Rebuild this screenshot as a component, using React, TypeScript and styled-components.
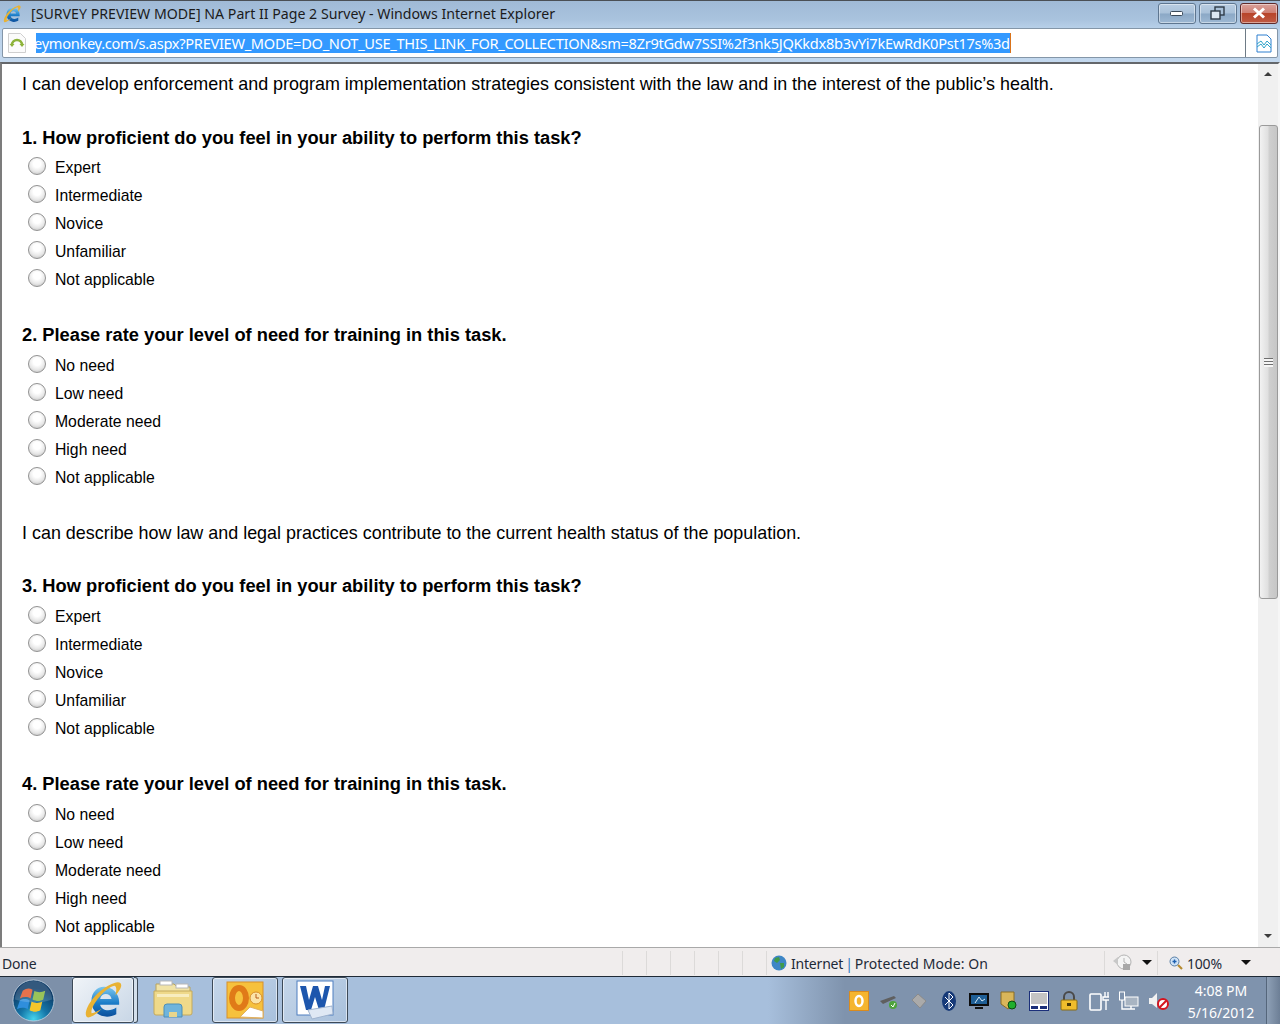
import React from "react";
import styled, { createGlobalStyle } from "styled-components";

const Global = createGlobalStyle`
  html, body { margin: 0; padding: 0; height: 100%; overflow: hidden; background: #fff; }
  #root { height: 100%; }
`;

const Screen = styled.div`
  width: 1280px;
  height: 1024px;
  display: flex;
  flex-direction: column;
  overflow: hidden;
  font-family: "Liberation Sans", Arial, sans-serif;
`;

const Chrome = styled.div`
  height: 62px;
  flex: none;
  background: linear-gradient(180deg, #a0bad6 0%, #a9c3de 30%, #b9d1ea 46%, #c3d8ee 100%);
  border-top: 1px solid #4a4f55;
  box-sizing: border-box;
  display: flex;
  flex-direction: column;
`;

const TitleRow = styled.div`
  height: 27px;
  flex: none;
  display: flex;
  align-items: center;
  padding: 0 2px 0 3px;
`;

const Title = styled.div`
  margin: -3px 0 0 10px;
  flex: 1;
  font: 14.17px "Noto Sans", sans-serif;
  color: #1b1b1b;
  white-space: nowrap;
`;

const TitleIcon = styled.div`
  display: flex;
  margin-top: -2px;
`;

const WinButtons = styled.div`
  display: flex;
  gap: 3px;
  margin-top: -3px;
`;

const WinButton = styled.div<{ $close?: boolean }>`
  width: 38px;
  height: 21px;
  box-sizing: border-box;
  border: 1px solid ${({ $close }) => ($close ? "#5f2a2a" : "#5e7690")};
  border-radius: 3px;
  box-shadow: inset 0 0 0 1px rgba(255, 255, 255, 0.45);
  display: flex;
  align-items: center;
  justify-content: center;
  background: ${({ $close }) =>
    $close
      ? "linear-gradient(180deg, #d9a19b 0%, #cf8074 45%, #b8442a 50%, #bf5a44 100%)"
      : "linear-gradient(180deg, #b9cde2 0%, #a9c1d9 48%, #8ba8c6 52%, #9db8d3 100%)"};
`;

const AddressRow = styled.div`
  height: 30px;
  flex: none;
  margin: 0 2px 0 2px;
  box-sizing: border-box;
  background: #fff;
  border: 1px solid #8496a8;
  border-radius: 2px;
  display: flex;
  align-items: center;
`;

const PageIcon = styled.div`
  width: 33px;
  flex: none;
  box-sizing: border-box;
  padding-right: 5px;
  display: flex;
  justify-content: center;
`;

const UrlClip = styled.div`
  flex: 1;
  height: 20px;
  overflow: hidden;
  white-space: nowrap;
  font: 14.6px "Noto Sans", sans-serif;
`;

const UrlSelected = styled.div`
  width: 975px;
  height: 20px;
  line-height: 20px;
  overflow: hidden;
  background: #3399ff;
  color: #fff;
  box-sizing: border-box;
  border-right: 1px solid #d9731a;
  letter-spacing: -0.29px;
  text-indent: -2px;
`;

const CompatBox = styled.div`
  width: 32px;
  height: 100%;
  flex: none;
  box-sizing: border-box;
  border-left: 1px solid #6e7b86;
  padding-left: 4px;
  display: flex;
  align-items: center;
  justify-content: center;
`;

const Viewport = styled.div`
  height: 885px;
  flex: none;
  display: flex;
  border-top: 2px solid #64676b;
  border-left: 2px solid #7c7c7c;
  border-right: 2px solid #f6f6f6;
  box-sizing: border-box;
  background: #fff;
`;

const Survey = styled.div`
  flex: 1;
  padding: 9px 0 0 20px;
  color: #000;
`;

const Statement = styled.div<{ $lead?: boolean }>`
  font-size: 17.93px;
  line-height: 22px;
  height: 22px;
  margin-bottom: ${({ $lead }) => ($lead ? 32 : 31)}px;
  white-space: nowrap;
`;

const QuestionBlock = styled.div`
  margin-bottom: 31px;
`;

const Question = styled.div<{ $lead?: boolean }>`
  font-size: 18.3px;
  font-weight: 700;
  line-height: 22px;
  height: 22px;
  margin-bottom: ${({ $lead }) => ($lead ? 4 : 5)}px;
  white-space: nowrap;
`;

const Option = styled.div`
  height: 28px;
  display: flex;
  align-items: center;
  padding-left: 6px;
`;

const Radio = styled.span`
  width: 18px;
  height: 18px;
  box-sizing: border-box;
  border-radius: 50%;
  border: 1px solid #929292;
  background: radial-gradient(circle at 50% 36%, #ffffff 28%, #e8e8e8 60%, #b4b4b4 100%);
  flex: none;
  margin-top: -2px;
`;

const OptionLabel = styled.span`
  margin: 2px 0 0 9px;
  font-size: 15.75px;
  white-space: nowrap;
`;

const ScrollBar = styled.div`
  width: 20px;
  flex: none;
  background: #f0f0f0;
  box-sizing: border-box;
  display: flex;
  flex-direction: column;
  align-items: center;
`;

const ScrollArrow = styled.div<{ $down?: boolean }>`
  height: 61px;
  width: 100%;
  flex: none;
  display: flex;
  justify-content: center;
  align-items: ${({ $down }) => ($down ? "flex-end" : "flex-start")};
  padding: ${({ $down }) => ($down ? "0 0 9px" : "8px 0 0")};
  box-sizing: border-box;
  &::before {
    content: "";
    border-left: 4px solid transparent;
    border-right: 4px solid transparent;
    ${({ $down }) => ($down ? "border-top" : "border-bottom")}: 4px solid #3c3c3c;
  }
`;

const Thumb = styled.div`
  width: 19px;
  height: 474px;
  flex: none;
  box-sizing: border-box;
  border: 1px solid #9a9a9a;
  border-radius: 3px;
  background: linear-gradient(90deg, #f2f2f2 0%, #e0e0e0 45%, #cfcfcf 55%, #c6c6c6 100%);
  display: flex;
  align-items: center;
  justify-content: center;
`;

const Grip = styled.div`
  width: 9px;
  height: 9px;
  background: repeating-linear-gradient(180deg, #6f6f6f 0 1px, #f5f5f5 1px 3px);
`;

const ScrollFill = styled.div`
  flex: 1;
`;

const StatusBar = styled.div`
  height: 29px;
  flex: none;
  box-sizing: border-box;
  border-top: 1px solid #a9a9a9;
  background: #f0eded;
  display: flex;
  align-items: center;
  font: 14px "Noto Sans", sans-serif;
  letter-spacing: -0.2px;
  color: #1e2a38;
  padding: 1px 0 0 2px;
`;

const StatusText = styled.div<{ $width: number }>`
  width: ${({ $width }) => $width}px;
  flex: none;
  white-space: nowrap;
  padding-top: 2px;
`;

const StatusCell = styled.div<{ $width: number }>`
  width: ${({ $width }) => $width}px;
  height: 24px;
  flex: none;
  box-sizing: border-box;
  border-left: 1px solid #dcdad9;
  display: flex;
  align-items: center;
  white-space: nowrap;
`;

const CellLabel = styled.span<{ $tracking?: number }>`
  padding-top: 2px;
  letter-spacing: ${({ $tracking }) => $tracking ?? -0.2}px;
`;

const Gap = styled.span<{ $w: number }>`
  width: ${({ $w }) => $w}px;
  flex: none;
`;

const Caret = styled.span`
  border-left: 5px solid transparent;
  border-right: 5px solid transparent;
  border-top: 5px solid #111;
`;

const ZoneSep = styled.span`
  color: #2b74bd;
  margin: 0 2px;
  padding-top: 2px;
`;

const Taskbar = styled.div`
  height: 48px;
  flex: none;
  box-sizing: border-box;
  border-top: 1px solid #1f2a36;
  display: flex;
  background: linear-gradient(90deg, #a7bfdc 0%, #a7bfdc 60%, #7f93ad 66%, #7f93ad 100%);
`;

const StartArea = styled.div`
  width: 72px;
  flex: none;
  background: #7d90a9;
  display: flex;
  align-items: center;
  padding-left: 12px;
  box-sizing: border-box;
`;

const TaskButton = styled.div<{ $active?: boolean; $bare?: boolean; $width: number }>`
  width: ${({ $width }) => $width}px;
  flex: none;
  height: 46px;
  margin-right: ${({ $active }) => ($active ? 0 : 4)}px;
  box-sizing: border-box;
  display: flex;
  align-items: center;
  justify-content: center;
  border-radius: 3px;
  border: ${({ $bare }) => ($bare ? "1px solid transparent" : "1px solid #3d4a58")};
  box-shadow: ${({ $bare }) => ($bare ? "none" : "inset 0 0 0 1px rgba(255,255,255,0.55)")};
  background: ${({ $active, $bare }) =>
    $bare
      ? "transparent"
      : $active
      ? "linear-gradient(135deg, #f0f4f8 0%, #c8d6e6 100%)"
      : "linear-gradient(135deg, #c5d6e9 0%, #a8c0dc 100%)"};
`;

const StackEdge = styled.div`
  width: 4px;
  height: 46px;
  flex: none;
  box-sizing: border-box;
  background: #d3dfeb;
  border: 1px solid #3d4a58;
  border-left: none;
  border-radius: 0 3px 3px 0;
`;

const TaskSpacer = styled.div`
  flex: 1;
`;

const Tray = styled.div`
  display: flex;
  align-items: center;
`;

const TrayCell = styled.div`
  width: 30px;
  flex: none;
  display: flex;
  justify-content: center;
  align-items: center;
`;

const Clock = styled.div`
  width: 92px;
  flex: none;
  text-align: center;
  font: 14px/22px "Noto Sans", sans-serif;
  color: #fff;
  padding: 3px 0 0 2px;
  box-sizing: border-box;
`;

const ShowDesktop = styled.div`
  width: 14px;
  flex: none;
  background: linear-gradient(90deg, #8ea0b6, #6d7f96);
  border-left: 1px solid #55667b;
  box-sizing: border-box;
`;

function IeLogo({ size, id }: { size: number; id: string }) {
  return (
    <svg width={size} height={size} viewBox="0 0 40 40">
      <defs>
        <linearGradient id={id} x1="0" y1="0" x2="0" y2="1">
          <stop offset="0" stopColor="#7cc8ef" />
          <stop offset="0.55" stopColor="#1b7cc8" />
          <stop offset="1" stopColor="#0b4f9c" />
        </linearGradient>
      </defs>
      <path
        d="M21 6c9 0 16 7 16 16v3H17c1 6 10 8 17 3v7c-11 6-25 1-26-12C7 13 13 6 21 6zm-4 13h12c-1-7-11-7-12 0z"
        fill={`url(#${id})`}
      />
      <path
        d="M3 38C-2 33 10 10 32 2c5-2 8 0 7 4-1 3-3 6-6 9 1-4 2-9-1-10C22 7 6 27 8 34c3 0 8-3 11-5-5 5-13 11-16 9z"
        fill="#e9b233"
      />
    </svg>
  );
}

function SiteIcon() {
  return (
    <svg width="20" height="22" viewBox="0 0 20 22">
      <path d="M1.5 1.5h12l5 5v14h-17z" fill="#fbfbfb" stroke="#cfcfcf" />
      <path d="M5 13a5 5 0 0 1 10 0" fill="none" stroke="#8db33a" strokeWidth="2.6" />
      <path d="M2.5 12h5l-2.5 3zM12.5 12h5L15 15z" fill="#8db33a" />
    </svg>
  );
}

function CompatIcon() {
  return (
    <svg width="16" height="19" viewBox="0 0 16 19">
      <path d="M1 1h10l4 4v13H1z" fill="#fff" stroke="#2d7fd0" />
      <path d="M1 10l4-3 3 4 3-4 4 4M1 13l4-3 3 4 3-4 4 4" fill="none" stroke="#2da3c9" />
    </svg>
  );
}

function Globe() {
  return (
    <svg width="16" height="16" viewBox="0 0 16 16">
      <circle cx="8" cy="8" r="7.5" fill="#3e86c6" />
      <path d="M4 3l4-1 1 3-3 3-3-2zM9 8l4 0 0 4-3 2z" fill="#3f9a4a" />
    </svg>
  );
}

function SecurityIcon() {
  return (
    <svg width="20" height="20" viewBox="0 0 20 20">
      <circle cx="11" cy="9" r="7" fill="#f4f4f4" stroke="#b4b4b4" />
      <path d="M11 5v4l3 2" fill="none" stroke="#b4b4b4" />
      <path d="M0 8l5-4v8z" fill="#c8c8c8" />
      <rect x="10" y="11" width="7" height="6" fill="#a8a8a8" />
    </svg>
  );
}

function Magnifier() {
  return (
    <svg width="14" height="14" viewBox="0 0 14 14">
      <circle cx="5.5" cy="5.5" r="4.5" fill="#cfe3f7" stroke="#5a7fa5" />
      <path d="M3.5 5.5h4M5.5 3.5v4" stroke="#1c5fb0" strokeWidth="1.4" />
      <path d="M9 9l4 4" stroke="#b58a2e" strokeWidth="2.2" />
    </svg>
  );
}

function StartOrb() {
  return (
    <svg width="43" height="43" viewBox="0 0 44 44">
      <defs>
        <radialGradient id="orb" cx="50%" cy="95%" r="75%">
          <stop offset="0" stopColor="#45d4ee" />
          <stop offset="0.45" stopColor="#1576a8" />
          <stop offset="1" stopColor="#0c3a66" />
        </radialGradient>
      </defs>
      <circle cx="22" cy="22" r="21" fill="url(#orb)" stroke="#c9d6e3" strokeOpacity="0.8" />
      <path d="M11 12c4-3 7-3 10-1l-2 9c-3-2-7-2-11 0z" fill="#e4582a" />
      <path d="M23 12c3 2 7 2 11 0l-2 9c-3 2-7 2-11 0z" fill="#86b83a" />
      <path d="M8 22c3-2 7-2 10 0l-2 9c-3-2-7-2-11 0z" fill="#2f8edc" />
      <path d="M20 23c4 2 7 2 11 0l-2 9c-4 2-7 2-11 0z" fill="#f5c62c" />
      <path d="M3 21a19 19 0 0 1 38 0c-10 4-26 4-38 0z" fill="#fff" fillOpacity="0.16" />
    </svg>
  );
}

function FolderIcon() {
  return (
    <svg width="42" height="42" viewBox="0 0 42 42">
      <path d="M4 5h18l3 3h13v6H4z" fill="#f1e3a6" stroke="#b8a35e" />
      <rect x="8" y="2" width="12" height="4" fill="#fff" stroke="#b8b8b8" />
      <rect x="24" y="5" width="12" height="4" fill="#fff" stroke="#b8b8b8" />
      <path d="M2 12h38v22a2 2 0 0 1-2 2H4a2 2 0 0 1-2-2z" fill="#efd98a" stroke="#c3a95c" />
      <path d="M5 15h32v3H5z" fill="#f8edc0" />
      <path d="M12 38V28a3 3 0 0 1 3-3h12a3 3 0 0 1 3 3v10z" fill="#6fb4dc" stroke="#4c8fb8" />
      <rect x="17" y="33" width="8" height="5" fill="#e8d58c" />
    </svg>
  );
}

function OutlookIcon() {
  return (
    <svg width="38" height="38" viewBox="0 0 38 38">
      <rect x="1" y="1" width="36" height="36" fill="#f6c13d" stroke="#d8902a" />
      <ellipse cx="13" cy="17" rx="7" ry="10" fill="none" stroke="#e07a18" strokeWidth="6" />
      <path d="M14 36l10-10 13 4v7z" fill="#fff" stroke="#e0b060" />
      <circle cx="30" cy="17" r="6" fill="#fbe4a8" stroke="#d8902a" />
      <path d="M30 13v4h3" fill="none" stroke="#b65c1a" />
    </svg>
  );
}

function WordIcon() {
  return (
    <svg width="38" height="40" viewBox="0 0 38 40">
      <rect x="1" y="1" width="36" height="34" fill="#fff" stroke="#4e7fc0" />
      <path d="M4 6h6l3 14 4-14h5l4 14 3-14h5l-6 24h-5L19 17l-4 13h-5z" fill="#1d56ad" />
      <path d="M12 30l24-4 1 8-21 5z" fill="#dfe8f4" stroke="#9fb3cf" />
    </svg>
  );
}

const TRAY_ICONS = [
  <svg width="20" height="20" viewBox="0 0 20 20">
    <rect x="0.5" y="0.5" width="19" height="19" fill="#f5b52f" stroke="#d98b1e" />
    <ellipse cx="10" cy="10" rx="3.5" ry="5" fill="none" stroke="#fff" strokeWidth="2.5" />
  </svg>,
  <svg width="20" height="18" viewBox="0 0 20 18">
    <path d="M1 9l14-5 2 2-13 6z" fill="#5f5f5f" />
    <circle cx="14" cy="13" r="4" fill="#4ea33c" />
    <path d="M12 13l2 2 2-4" fill="none" stroke="#fff" />
  </svg>,
  <svg width="18" height="18" viewBox="0 0 18 18">
    <path d="M2 8l6-6 8 7-6 7z" fill="#aaa" stroke="#8a8a8a" />
  </svg>,
  <svg width="14" height="20" viewBox="0 0 14 20">
    <ellipse cx="7" cy="10" rx="7" ry="10" fill="#173a78" />
    <path d="M3 6l8 8-4 4V2l4 4-8 8" fill="none" stroke="#fff" />
  </svg>,
  <svg width="20" height="18" viewBox="0 0 20 18">
    <rect x="0" y="1" width="20" height="13" fill="#0d0d0d" />
    <rect x="2" y="3" width="16" height="9" fill="#1f5f96" />
    <path d="M6 11l4-6 3 4 3-2" fill="none" stroke="#d9ecf8" />
    <rect x="6" y="15" width="8" height="2" fill="#111" />
  </svg>,
  <svg width="18" height="20" viewBox="0 0 18 20">
    <path d="M1 1h13v12l-6 5-7-5z" fill="#d9b65a" stroke="#8a6d24" />
    <circle cx="12" cy="14" r="4" fill="#1fae2e" stroke="#0a4a12" />
  </svg>,
  <svg width="20" height="20" viewBox="0 0 20 20">
    <rect x="0.5" y="0.5" width="19" height="19" fill="#fff" stroke="#1b2f7a" />
    <rect x="2" y="2" width="16" height="11" fill="#c4c4c4" />
    <rect x="2" y="15" width="7" height="3" fill="#1b2f7a" />
    <rect x="11" y="15" width="7" height="3" fill="#1b2f7a" />
  </svg>,
  <svg width="18" height="20" viewBox="0 0 18 20">
    <path d="M4 9V6a5 5 0 0 1 10 0v3" fill="none" stroke="#4a4a4a" strokeWidth="2" />
    <rect x="1" y="9" width="16" height="10" rx="1" fill="#f0bd2c" stroke="#8a6d14" />
    <rect x="7" y="12" width="4" height="3" fill="#4a3a08" />
  </svg>,
  <svg width="20" height="20" viewBox="0 0 20 20">
    <rect x="1" y="3" width="11" height="16" rx="1" fill="#7f93ad" stroke="#fff" strokeWidth="1.6" />
    <path d="M16 1v5M19 1v5M14 6h7v3h-7zM17 9v10" fill="none" stroke="#fff" strokeWidth="1.4" />
  </svg>,
  <svg width="20" height="20" viewBox="0 0 20 20">
    <rect x="0.5" y="1" width="5" height="8" fill="none" stroke="#fff" />
    <rect x="6" y="6" width="13" height="9" fill="#a8b4c2" stroke="#fff" />
    <path d="M3 9v9h13M12 15v3" fill="none" stroke="#fff" strokeWidth="1.4" />
  </svg>,
  <svg width="20" height="20" viewBox="0 0 20 20">
    <path d="M0 7h3l5-5v15l-5-4H0z" fill="#f1f1f1" />
    <circle cx="14" cy="13" r="5" fill="#fff" stroke="#d5141e" strokeWidth="2" />
    <path d="M10.5 16.5l7-7" stroke="#d5141e" strokeWidth="2" />
  </svg>,
];

const PROFICIENCY = ["Expert", "Intermediate", "Novice", "Unfamiliar", "Not applicable"];
const NEED = ["No need", "Low need", "Moderate need", "High need", "Not applicable"];

const SECTIONS = [
  {
    statement:
      "I can develop enforcement and program implementation strategies consistent with the law and in the interest of the public’s health.",
    first: 1,
  },
  {
    statement:
      "I can describe how law and legal practices contribute to the current health status of the population.",
    first: 3,
  },
];

function QuestionGroup({ title, options, lead }: { title: string; options: string[]; lead?: boolean }) {
  return (
    <QuestionBlock>
      <Question $lead={lead}>{title}</Question>
      {options.map((o) => (
        <Option key={o}>
          <Radio />
          <OptionLabel>{o}</OptionLabel>
        </Option>
      ))}
    </QuestionBlock>
  );
}

export default function App() {
  return (
    <Screen>
      <Global />
      <Chrome>
        <TitleRow>
          <TitleIcon>
            <IeLogo size={18} id="ieTitle" />
          </TitleIcon>
          <Title>[SURVEY PREVIEW MODE] NA Part II Page 2 Survey - Windows Internet Explorer</Title>
          <WinButtons>
            <WinButton>
              <svg width="14" height="8" viewBox="0 0 14 8">
                <rect x="0.5" y="2.5" width="12" height="4" rx="1" fill="#fff" stroke="#3a4a5a" />
              </svg>
            </WinButton>
            <WinButton>
              <svg width="16" height="14" viewBox="0 0 16 14">
                <rect x="5" y="1" width="9" height="8" fill="#a9c1d9" stroke="#2e3a46" strokeWidth="1.4" />
                <rect x="1" y="5" width="9" height="8" fill="#dce6f0" stroke="#2e3a46" strokeWidth="1.4" />
              </svg>
            </WinButton>
            <WinButton $close>
              <svg width="14" height="12" viewBox="0 0 14 12">
                <path d="M2 1.5l10 9M12 1.5l-10 9" stroke="#fff" strokeWidth="3" />
              </svg>
            </WinButton>
          </WinButtons>
        </TitleRow>
        <AddressRow>
          <PageIcon>
            <SiteIcon />
          </PageIcon>
          <UrlClip>
            <UrlSelected>
              eymonkey.com/s.aspx?PREVIEW_MODE=DO_NOT_USE_THIS_LINK_FOR_COLLECTION&amp;sm=8Zr9tGdw7SSI%2f3nk5JQKkdx8b3vYi7kEwRdK0Pst17s%3d
            </UrlSelected>
          </UrlClip>
          <CompatBox>
            <CompatIcon />
          </CompatBox>
        </AddressRow>
      </Chrome>
      <Viewport>
        <Survey>
          {SECTIONS.map((s) => (
            <React.Fragment key={s.first}>
              <Statement $lead={s.first === 1}>{s.statement}</Statement>
              <QuestionGroup
                title={`${s.first}. How proficient do you feel in your ability to perform this task?`}
                options={PROFICIENCY}
                lead={s.first === 1}
              />
              <QuestionGroup
                title={`${s.first + 1}. Please rate your level of need for training in this task.`}
                options={NEED}
              />
            </React.Fragment>
          ))}
        </Survey>
        <ScrollBar>
          <ScrollArrow />
          <Thumb>
            <Grip />
          </Thumb>
          <ScrollFill />
          <ScrollArrow $down />
        </ScrollBar>
      </Viewport>
      <StatusBar>
        <StatusText $width={620}>Done</StatusText>
        <StatusCell $width={24} />
        <StatusCell $width={24} />
        <StatusCell $width={24} />
        <StatusCell $width={24} />
        <StatusCell $width={24} />
        <StatusCell $width={24} />
        <StatusCell $width={338}>
          <Gap $w={4} />
          <Globe />
          <Gap $w={4} />
          <CellLabel>Internet</CellLabel>
          <ZoneSep>|</ZoneSep>
          <CellLabel $tracking={0.08}>Protected Mode: On</CellLabel>
        </StatusCell>
        <StatusCell $width={53}>
          <Gap $w={8} />
          <SecurityIcon />
          <Gap $w={9} />
          <Caret />
        </StatusCell>
        <StatusCell $width={120}>
          <Gap $w={11} />
          <Magnifier />
          <Gap $w={4} />
          <CellLabel>100%</CellLabel>
          <Gap $w={19} />
          <Caret />
        </StatusCell>
      </StatusBar>
      <Taskbar>
        <StartArea>
          <StartOrb />
        </StartArea>
        <TaskButton $active $width={62}>
          <IeLogo size={38} id="ieTask" />
        </TaskButton>
        <StackEdge />
        <TaskButton $bare $width={70}>
          <FolderIcon />
        </TaskButton>
        <TaskButton $width={66}>
          <OutlookIcon />
        </TaskButton>
        <TaskButton $width={66}>
          <WordIcon />
        </TaskButton>
        <TaskSpacer />
        <Tray>
          {TRAY_ICONS.map((icon, i) => (
            <TrayCell key={i}>{icon}</TrayCell>
          ))}
        </Tray>
        <Clock>
          4:08 PM
          <br />
          5/16/2012
        </Clock>
        <ShowDesktop />
      </Taskbar>
    </Screen>
  );
}
